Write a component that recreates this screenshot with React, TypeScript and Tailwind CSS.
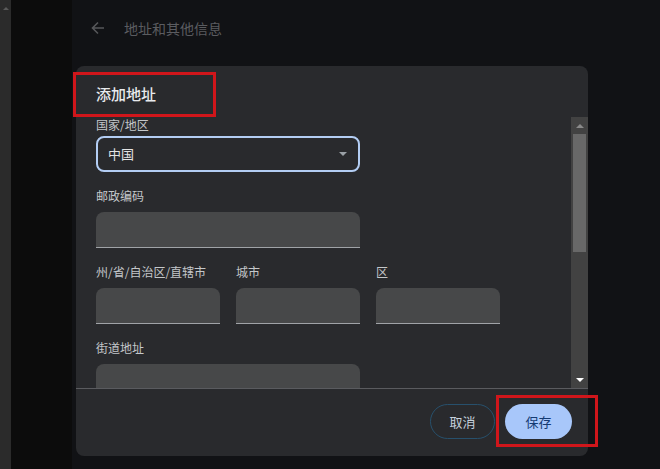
import React from "react";

const font = { fontFamily: '"Noto Sans CJK SC", "Noto Sans", sans-serif' };

function Field({ w, label, labelTop }: { w: string; label: string; labelTop?: string }) {
  return (
    <div className={`flex flex-col ${w}`}>
      <div className={`h-4 leading-4 text-[12px] text-[#c4c7ca] ${labelTop ?? ""}`}>{label}</div>
      <div className="mt-2 h-9 rounded-t-lg bg-[#474849] border-b border-[#a0a3a7]" />
    </div>
  );
}

export default function App() {
  return (
    <div className="w-[660px] h-[469px] flex overflow-hidden bg-[#111215]" style={font}>
      <div className="w-[11px] h-full bg-[#2b2b2b] flex justify-center pt-[7px]">
        <div className="w-0 h-0 border-l-[3px] border-r-[3px] border-b-[3px] border-l-transparent border-r-transparent border-b-[#5a5a5a]" />
      </div>
      <div className="w-[61px] h-full bg-[#0c0c0c]" />
      <div className="flex-1 relative bg-[#111215]">
        <div className="flex items-center h-[56px] pl-[18px] gap-[18px]">
          <svg width="16" height="16" viewBox="0 0 16 16" fill="none">
            <path d="M14 8H2.5M8 2.5L2.5 8L8 13.5" stroke="#56575a" strokeWidth="1.6" />
          </svg>
          <span className="text-[14px] text-[#5b5c60]">地址和其他信息</span>
        </div>

        <div className="absolute left-[4px] top-[66px] w-[512px] h-[390px] rounded-lg bg-[#292a2d] flex flex-col overflow-hidden">
          <div className="h-[51px] flex items-center pl-[20px] pt-[5px]">
            <span className="text-[15px] font-medium text-[#e8eaed]">添加地址</span>
          </div>
          <div className="flex h-[271px]">
            <div className="flex-1 pl-[20px] overflow-hidden">
              <div className="h-4 leading-4 text-[12px] text-[#c4c7ca]">国家/地区</div>
              <div className="mt-[3px] w-[264px] h-9 rounded-lg border-2 border-[#b3cdf3] flex items-center justify-between pl-[10px] pr-[11px]">
                <span className="text-[13px] text-[#e3e3e3]">中国</span>
                <div className="w-0 h-0 border-l-[4px] border-r-[4px] border-t-[4px] border-l-transparent border-r-transparent border-t-[#9aa0a6]" />
              </div>
              <Field w="w-[264px] mt-[16px]" label="邮政编码" />
              <div className="flex gap-4 mt-[16px]">
                <Field w="w-[124px]" label="州/省/自治区/直辖市" />
                <Field w="w-[124px]" label="城市" />
                <Field w="w-[124px]" label="区" />
              </div>
              <Field w="w-[264px] mt-[16px]" label="街道地址" />
            </div>
            <div className="w-[17px] h-full bg-[#424242] flex flex-col items-center">
              <div className="h-[17px] flex items-center justify-center">
                <div className="w-0 h-0 border-l-[4px] border-r-[4px] border-b-[4px] border-l-transparent border-r-transparent border-b-[#8a8a8a]" />
              </div>
              <div className="w-[13px] h-[118px] bg-[#686868]" />
              <div className="flex-1" />
              <div className="h-[17px] flex items-center justify-center">
                <div className="w-0 h-0 border-l-[4px] border-r-[4px] border-t-[4px] border-l-transparent border-r-transparent border-t-[#ffffff]" />
              </div>
            </div>
          </div>
          <div className="h-px bg-[#5a5b5f]" />
          <div className="flex-1 flex items-center justify-end gap-[10px] pr-4 pb-[2px]">
            <div className="w-[65px] h-[35px] rounded-full border border-[#27506c] flex items-center justify-center text-[13px] text-[#c5d0dc]">
              取消
            </div>
            <div className="w-[67px] h-[35px] rounded-full bg-[#a8c7fa] flex items-center justify-center text-[13px] text-[#143a72]">
              保存
            </div>
          </div>
        </div>

        <div className="absolute left-[1px] top-[72px] w-[143px] h-[45px] border-[3px] border-[#d0161b]" />
        <div className="absolute left-[424px] top-[395px] w-[102px] h-[52px] border-[3px] border-[#d0161b]" />
      </div>
    </div>
  );
}
